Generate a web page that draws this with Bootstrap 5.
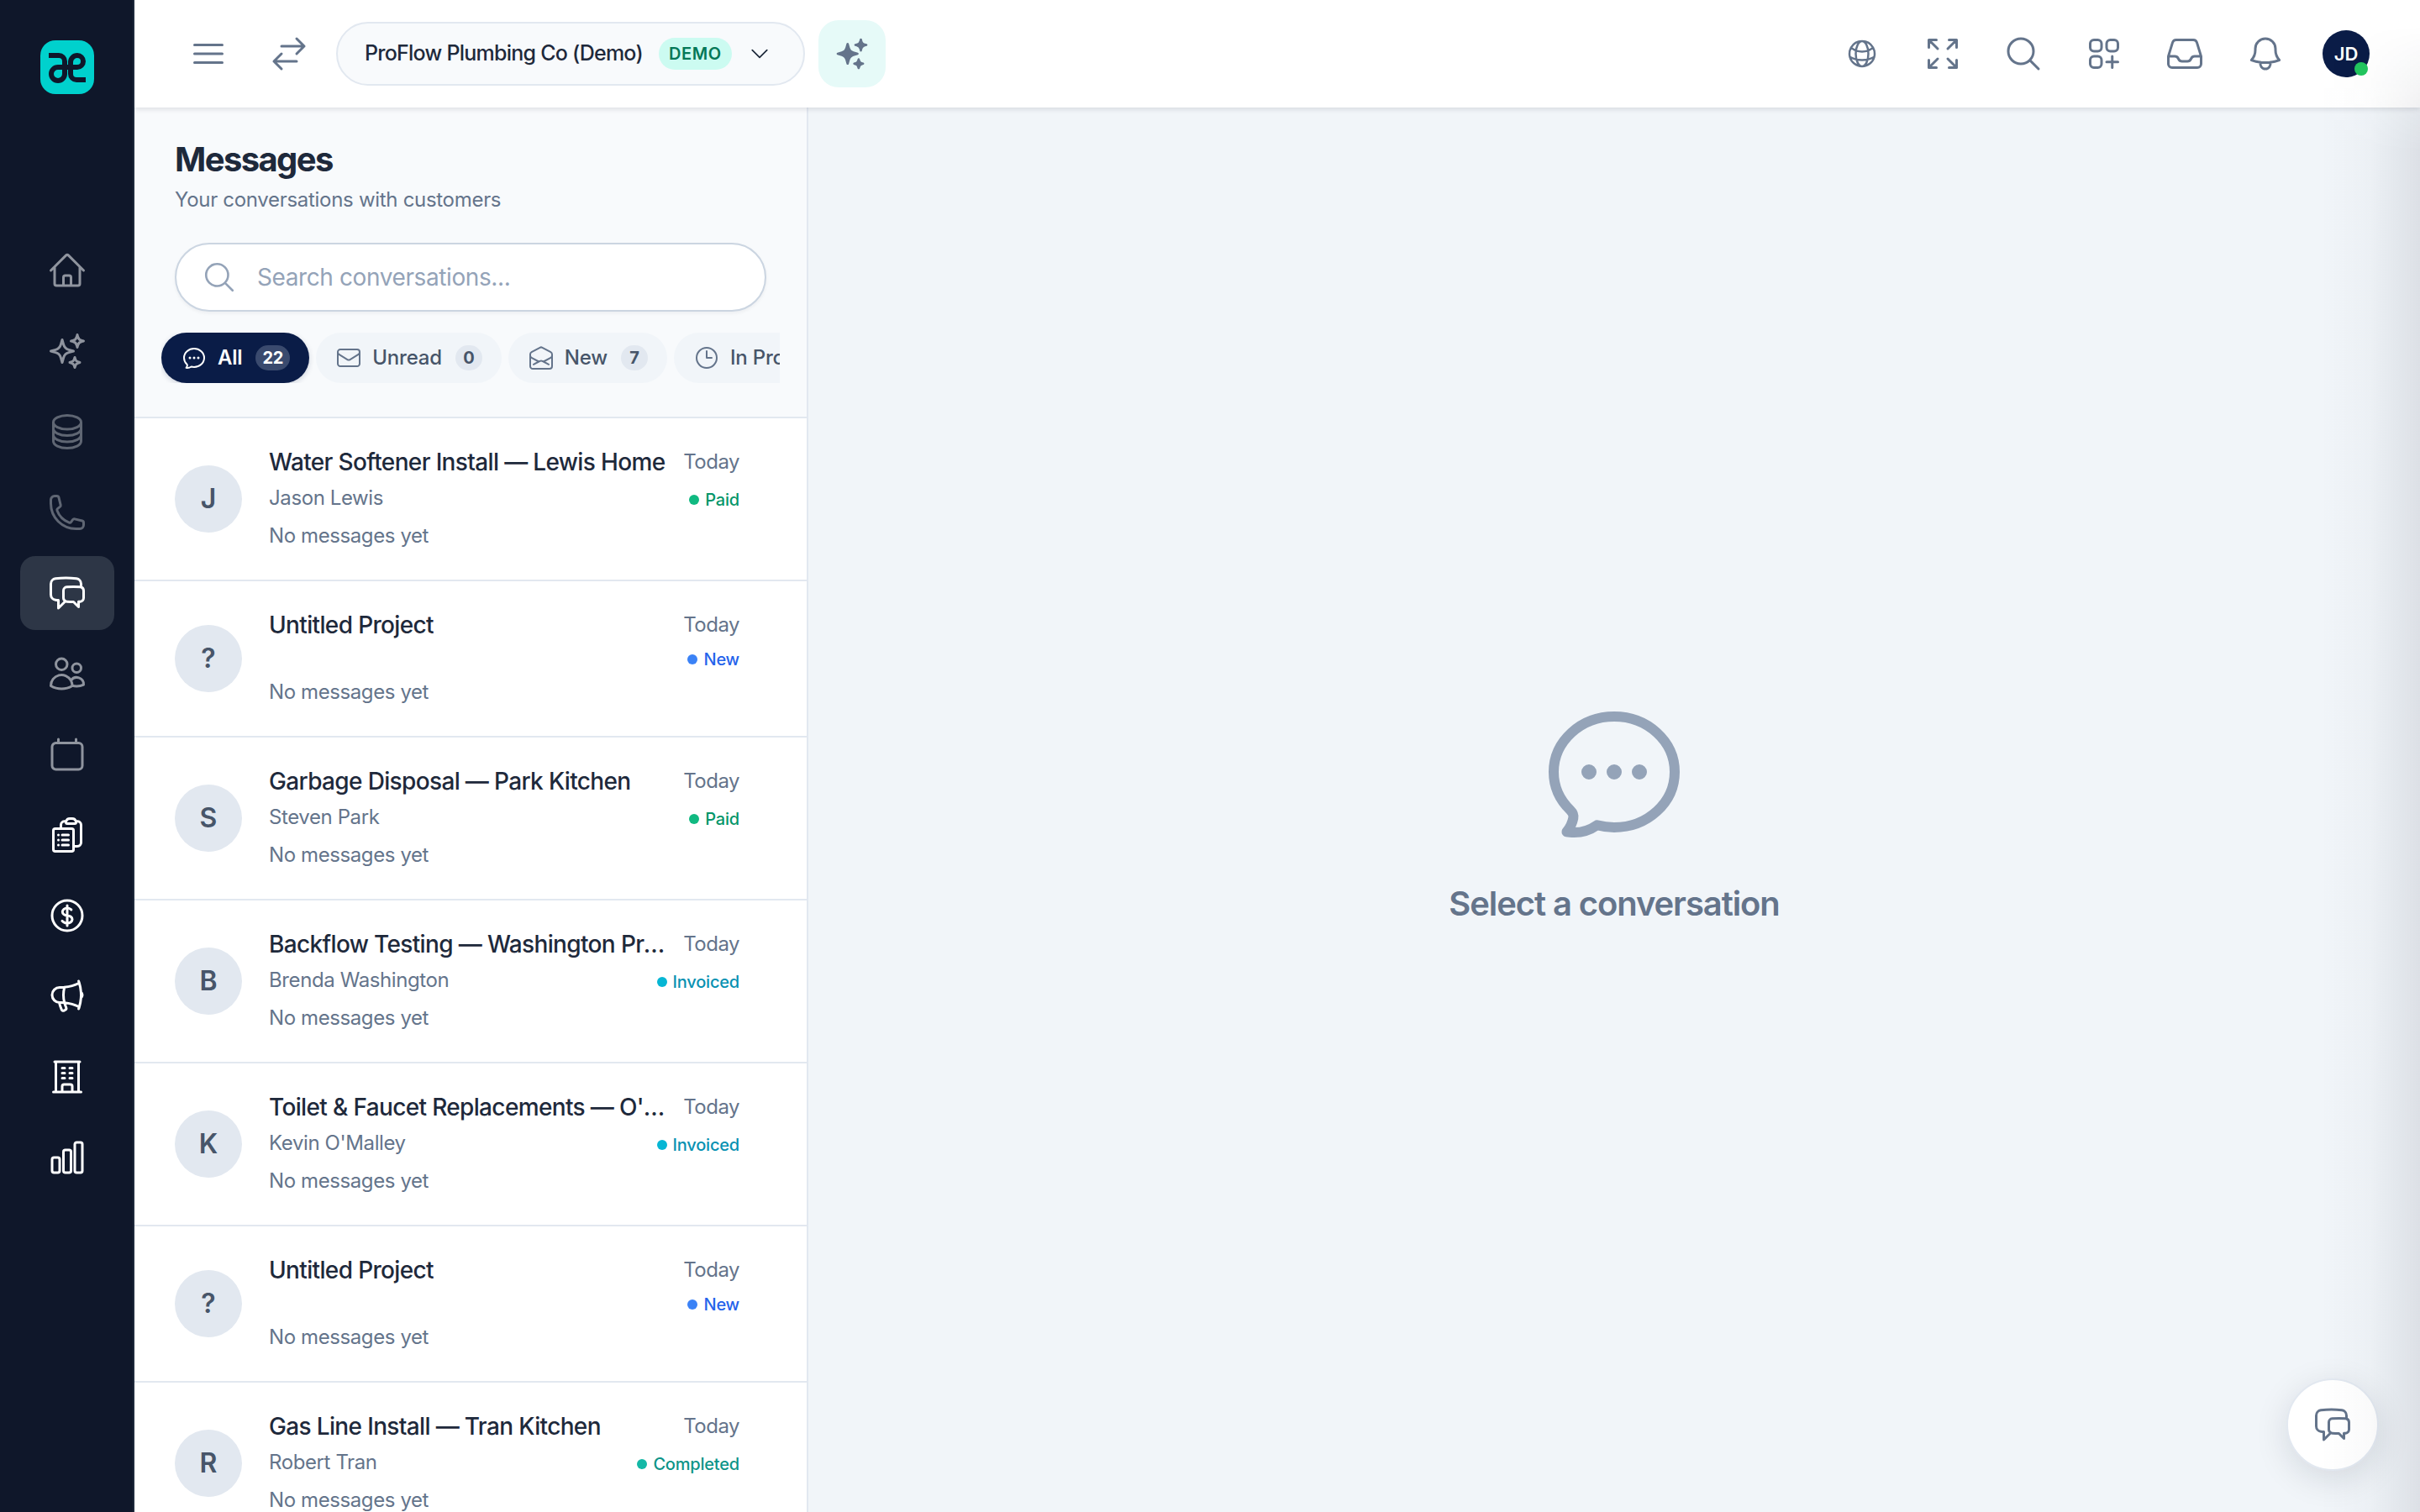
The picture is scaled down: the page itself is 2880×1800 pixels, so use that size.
<!DOCTYPE html>
<html lang="en">

<head>
    <meta charset="UTF-8">
    <title>Messages</title>
    <link href="https://cdn.jsdelivr.net/npm/bootstrap@5.3.0/dist/css/bootstrap.min.css" rel="stylesheet">
    <style>
        body {
            font-family: "Inter", "Liberation Sans", sans-serif;
            background-color: #f1f5f9;
            color: #1e293b;
        }

        .ico {
            fill: none;
            stroke: currentColor;
            stroke-width: 1.5;
            stroke-linecap: round;
            stroke-linejoin: round;
            flex-shrink: 0;
        }

        /* sidebar */
        .side-bar {
            width: 160px;
            background-color: #0f172a;
            border-right: 2px solid #1e293b;
        }

        .logo-box {
            width: 64px;
            height: 64px;
            margin: 48px 0 166px 48px;
            background-color: #00d1cd;
            border-radius: 18px;
        }

        .side-link {
            width: 112px;
            height: 88px;
            border-radius: 18px;
            margin-left: 24px;
            color: #fff;
        }

        .side-link.on {
            background-color: #2d3646;
        }

        .dim-1 {
            color: #8f949e;
        }

        .dim-2 {
            color: #5f6673;
        }

        /* top bar */
        .top-bar {
            height: 128px;
            background-color: #fff;
            box-shadow: 0 2px 6px rgba(15, 23, 42, .12);
            padding: 0 48px;
            z-index: 5;
        }

        .top-btn {
            width: 80px;
            height: 80px;
            padding: 0;
            border: 0;
            color: #64748b;
        }

        .org-pill {
            width: 558px;
            height: 76px;
            padding: 0 38px 0 32px;
            background-color: #f8fafc;
            border: 2px solid #e2e8f0;
            font-size: 25px;
            font-weight: 500;
            color: #1e293b;
            letter-spacing: -.75px;
            white-space: nowrap;
        }

        .demo-tag {
            margin-left: 19px;
            padding: 0 12px;
            height: 38px;
            line-height: 38px;
            font-size: 20px;
            font-weight: 600;
            letter-spacing: .6px;
            color: #047857;
            background-color: #ccfbf1;
        }

        .spark-btn {
            width: 80px;
            height: 80px;
            border-radius: 24px;
            background-color: #e6faf8;
            color: #64748b;
        }

        .me-chip {
            width: 56px;
            height: 56px;
            background-color: #0a1c47;
            color: #fff;
            font-size: 22px;
            font-weight: 600;
        }

        .on-dot {
            width: 16px;
            height: 16px;
            right: 2px;
            bottom: 2px;
            background-color: #22c55e;
        }

        /* messages panel */
        .msg-panel {
            width: 802px;
            background-color: #fff;
            border-right: 2px solid #e2e8f0;
        }

        .panel-head {
            background-color: #f8fafc;
            padding: 34px 32px 40px;
            border-bottom: 2px solid #e2e8f0;
        }

        .panel-title {
            font-size: 40px;
            line-height: 56px;
            font-weight: 700;
            letter-spacing: -1.6px;
            color: #1e293b;
            margin: 0 16px 2px;
        }

        .panel-sub {
            font-size: 24px;
            line-height: 36px;
            letter-spacing: -.3px;
            color: #64748b;
            margin: 0 16px 33px;
        }

        .search-wrap {
            margin: 0 0 25px 16px;
            width: 704px;
            color: #94a3b8;
        }

        .search-wrap svg {
            left: 32px;
            top: 20px;
        }

        .search-input {
            height: 82px;
            padding: 0 32px 0 96px;
            font-size: 28px;
            letter-spacing: -.4px;
            border: 2px solid #cbd5e1;
            box-shadow: 0 2px 4px rgba(15, 23, 42, .05);
        }

        .search-input::placeholder {
            color: #94a3b8;
        }

        .chip-row {
            width: 736px;
        }

        .chip {
            height: 60px;
            padding: 0 23px 0 23px;
            background-color: #f1f5f9;
            color: #475569;
            font-size: 24px;
            font-weight: 500;
            letter-spacing: -.2px;
            white-space: nowrap;
        }

        .chip svg {
            color: #64748b;
            margin-right: 12px;
        }

        .chip.on {
            background-color: #0a1c47;
            color: #fff;
            font-weight: 600;
            box-shadow: 0 2px 6px rgba(10, 28, 71, .18);
        }

        .chip.on svg {
            color: #fff;
        }

        .chip-num {
            margin-left: 16px;
            min-width: 32px;
            height: 30px;
            padding: 0 8px;
            font-size: 20px;
            line-height: 30px;
            font-weight: 700;
            text-align: center;
            color: #475569;
            background-color: #e2e8f0;
        }

        .chip.on .chip-num {
            min-width: 40px;
            color: #fff;
            background-color: #3a4a6e;
        }

        .list-group-flush > .list-group-item.msg-row {
            padding: 28px 80px 34px 48px;
            border-width: 0 0 2px;
            border-style: solid;
            border-color: #e2e8f0;
            border-radius: 0;
        }

        .avatar-chip {
            width: 80px;
            height: 80px;
            margin: 6px 32px 0 0;
            background-color: #e2e8f0;
            color: #475569;
            font-size: 32px;
            font-weight: 600;
        }

        .row-title {
            padding-top: 2px;
            font-size: 28px;
            line-height: 44px;
            font-weight: 500;
            letter-spacing: -.65px;
            color: #1e293b;
            margin-right: 16px;
        }

        .row-when {
            padding-top: 2px;
            font-size: 24px;
            line-height: 44px;
            letter-spacing: -.5px;
            color: #64748b;
        }

        .row-mid {
            margin-top: 4px;
            min-height: 28px;
        }

        .row-client {
            font-size: 24px;
            line-height: 34px;
            height: 36px;
            letter-spacing: -.4px;
            color: #64748b;
        }

        .row-status {
            padding-top: 2px;
            font-size: 20px;
            line-height: 26px;
            font-weight: 500;
            letter-spacing: -.2px;
        }

        .row-status i {
            display: inline-block;
            width: 12px;
            height: 12px;
            margin-right: 7px;
            border-radius: 50%;
        }

        .st-paid { color: #059669; }
        .st-paid i { background-color: #10b981; }
        .st-new { color: #2563eb; }
        .st-new i { background-color: #3b82f6; }
        .st-inv { color: #0891b2; }
        .st-inv i { background-color: #06b6d4; }
        .st-done { color: #0d9488; }
        .st-done i { background-color: #14b8a6; }

        .row-last {
            margin-top: 8px;
            font-size: 24px;
            line-height: 36px;
            letter-spacing: -.4px;
            color: #64748b;
        }

        /* empty state */
        .empty-label {
            margin-top: 31px;
            font-size: 40px;
            line-height: 60px;
            font-weight: 600;
            letter-spacing: -1.1px;
            color: #64748b;
        }

        .empty-icon {
            color: #94a3b8;
        }

        .help-fab {
            right: 49px;
            bottom: 49px;
            width: 110px;
            height: 110px;
            padding: 0;
            background-color: #fff;
            border: 2px solid #e2e8f0;
            color: #64748b;
            box-shadow: 0 10px 40px rgba(15, 23, 42, .12);
            z-index: 6;
        }

        .edge-shade {
            top: 0;
            right: 0;
            bottom: 0;
            width: 120px;
            background: linear-gradient(to right, rgba(15, 23, 42, 0), rgba(15, 23, 42, .02) 50%, rgba(15, 23, 42, .09));
            -webkit-mask-image: linear-gradient(to bottom, transparent 30px, #000 180px);
            mask-image: linear-gradient(to bottom, transparent 30px, #000 180px);
            pointer-events: none;
            z-index: 7;
        }
    </style>
</head>

<body>
    <!-- icon set -->
    <svg width="0" height="0" class="position-absolute">
        <defs>
            <symbol id="i-home" viewBox="0 0 24 24"><path d="m2.25 12 8.954-8.955c.44-.439 1.152-.439 1.591 0L21.75 12M4.5 9.75v10.125c0 .621.504 1.125 1.125 1.125H9.75v-4.875c0-.621.504-1.125 1.125-1.125h2.25c.621 0 1.125.504 1.125 1.125V21h4.125c.621 0 1.125-.504 1.125-1.125V9.75M8.25 21h8.25"/></symbol>
            <symbol id="i-spark" viewBox="0 0 24 24"><path d="M9.813 15.904 9 18.75l-.813-2.846a4.5 4.5 0 0 0-3.09-3.09L2.25 12l2.846-.813a4.5 4.5 0 0 0 3.09-3.09L9 5.25l.813 2.846a4.5 4.5 0 0 0 3.09 3.09L15.75 12l-2.846.813a4.5 4.5 0 0 0-3.09 3.09ZM18.259 8.715 18 9.75l-.259-1.035a3.375 3.375 0 0 0-2.455-2.456L14.25 6l1.036-.259a3.375 3.375 0 0 0 2.455-2.456L18 2.25l.259 1.035a3.375 3.375 0 0 0 2.456 2.456L21.75 6l-1.035.259a3.375 3.375 0 0 0-2.456 2.456ZM16.894 20.567 16.5 21.75l-.394-1.183a2.25 2.25 0 0 0-1.423-1.423L13.5 18.75l1.183-.394a2.25 2.25 0 0 0 1.423-1.423l.394-1.183.394 1.183a2.25 2.25 0 0 0 1.423 1.423l1.183.394-1.183.394a2.25 2.25 0 0 0-1.423 1.423Z"/></symbol>
            <symbol id="i-stack" viewBox="0 0 24 24"><path d="M20.25 6.375c0 2.278-3.694 4.125-8.25 4.125S3.75 8.653 3.75 6.375m16.5 0c0-2.278-3.694-4.125-8.25-4.125S3.75 4.097 3.75 6.375m16.5 0v11.25c0 2.278-3.694 4.125-8.25 4.125s-8.25-1.847-8.25-4.125V6.375m16.5 0v3.75m-16.5-3.75v3.75m16.5 0v3.75C20.25 16.153 16.556 18 12 18s-8.25-1.847-8.25-4.125v-3.75m16.5 0c0 2.278-3.694 4.125-8.25 4.125s-8.25-1.847-8.25-4.125"/></symbol>
            <symbol id="i-phone" viewBox="0 0 24 24"><path d="M2.25 6.75c0 8.284 6.716 15 15 15h2.25a2.25 2.25 0 0 0 2.25-2.25v-1.372c0-.516-.351-.966-.852-1.091l-4.423-1.106c-.44-.11-.902.055-1.173.417l-.97 1.293c-.282.376-.769.542-1.21.38a12.035 12.035 0 0 1-7.143-7.143c-.162-.441.004-.928.38-1.21l1.293-.97c.363-.271.527-.734.417-1.173L6.963 3.102a1.125 1.125 0 0 0-1.091-.852H4.5A2.25 2.25 0 0 0 2.25 4.5v2.25Z"/></symbol>
            <symbol id="i-chats" viewBox="0 0 24 24"><path d="M20.25 8.511c.884.284 1.5 1.128 1.5 2.097v4.286c0 1.136-.847 2.1-1.98 2.193-.34.027-.68.052-1.02.072v3.091l-3-3c-1.354 0-2.694-.055-4.02-.163a2.115 2.115 0 0 1-.825-.242m9.345-8.334a2.126 2.126 0 0 0-.476-.095 48.64 48.64 0 0 0-8.048 0c-1.131.094-1.976 1.057-1.976 2.192v4.286c0 .837.46 1.58 1.155 1.951m9.345-8.334V6.637c0-1.621-1.152-3.026-2.76-3.235A48.455 48.455 0 0 0 11.25 3c-2.115 0-4.198.137-6.24.402-1.608.209-2.76 1.614-2.76 3.235v6.226c0 1.621 1.152 3.026 2.76 3.235.577.075 1.157.14 1.74.194V21l4.155-4.155"/></symbol>
            <symbol id="i-users" viewBox="0 0 24 24"><path d="M15 19.128a9.38 9.38 0 0 0 2.625.372 9.337 9.337 0 0 0 4.121-.952 4.125 4.125 0 0 0-7.533-2.493M15 19.128v-.003c0-1.113-.285-2.16-.786-3.07M15 19.128v.106A12.318 12.318 0 0 1 8.624 21c-2.331 0-4.512-.645-6.374-1.766l-.001-.109a6.375 6.375 0 0 1 11.964-3.07M12 6.375a3.375 3.375 0 1 1-6.75 0 3.375 3.375 0 0 1 6.75 0Zm8.25 2.25a2.625 2.625 0 1 1-5.25 0 2.625 2.625 0 0 1 5.25 0Z"/></symbol>
            <symbol id="i-cal" viewBox="0 0 24 24"><path d="M6.75 3v2.25M17.25 3v2.25M3 18.75V7.500a2.250 2.250 0 0 1 2.250-2.250h13.500A2.250 2.250 0 0 1 21 7.500v11.250A2.250 2.250 0 0 1 18.750 21H5.250A2.250 2.250 0 0 1 3 18.750Z"/></symbol>
            <symbol id="i-clip" viewBox="0 0 24 24"><path d="M9 12h3.75M9 15h3.75M9 18h3.75m3 .75H18a2.25 2.25 0 0 0 2.25-2.25V6.108c0-1.135-.845-2.098-1.976-2.192a48.424 48.424 0 0 0-1.123-.08m-5.801 0c-.065.21-.1.433-.1.664 0 .414.336.75.75.75h4.5a.75.75 0 0 0 .75-.75 2.25 2.25 0 0 0-.1-.664m-5.8 0A2.251 2.251 0 0 1 13.5 2.25H15c1.012 0 1.867.668 2.15 1.586m-5.8 0c-.376.023-.75.05-1.124.08C9.095 4.01 8.25 4.973 8.25 6.108V8.25m0 0H4.875c-.621 0-1.125.504-1.125 1.125v11.25c0 .621.504 1.125 1.125 1.125h9.75c.621 0 1.125-.504 1.125-1.125V9.375c0-.621-.504-1.125-1.125-1.125H8.25ZM6.75 12h.008v.008H6.75V12Zm0 3h.008v.008H6.75V15Zm0 3h.008v.008H6.75V18Z"/></symbol>
            <symbol id="i-dollar" viewBox="0 0 24 24"><path d="M12 6v12m-3-2.818.879.659c1.171.879 3.07.879 4.242 0 1.172-.879 1.172-2.303 0-3.182C13.536 12.219 12.768 12 12 12c-.725 0-1.45-.22-2.003-.659-1.106-.879-1.106-2.303 0-3.182s2.9-.879 4.006 0l.415.33M21 12a9 9 0 1 1-18 0 9 9 0 0 1 18 0Z"/></symbol>
            <symbol id="i-mega" viewBox="0 0 24 24"><path d="M10.34 15.84c-.688-.06-1.386-.09-2.09-.09H7.5a4.5 4.5 0 1 1 0-9h.75c.704 0 1.402-.03 2.09-.09m0 9.18c.253.962.584 1.892.985 2.783.247.55.06 1.21-.463 1.511l-.657.38c-.551.318-1.26.117-1.527-.461a20.845 20.845 0 0 1-1.44-4.282m3.102.069a18.03 18.03 0 0 1-.59-4.59c0-1.586.205-3.124.59-4.59m0 9.18a23.848 23.848 0 0 1 8.835 2.535M10.34 6.66a23.847 23.847 0 0 0 8.835-2.535m0 0A23.74 23.74 0 0 0 18.795 3m.38 1.125a23.91 23.91 0 0 1 1.014 5.395m-1.014 8.855c-.118.38-.245.754-.38 1.125m.38-1.125a23.91 23.91 0 0 0 1.014-5.395m0-3.46c.495.413.811 1.035.811 1.73 0 .695-.316 1.317-.811 1.73m0-3.46a24.347 24.347 0 0 1 0 3.46"/></symbol>
            <symbol id="i-office" viewBox="0 0 24 24"><path d="M3.75 21h16.5M4.5 3h15M5.25 3v18m13.5-18v18M9 6.75h1.5m-1.5 3h1.5m-1.5 3h1.5m3-6H15m-1.5 3H15m-1.5 3H15M9 21v-3.375c0-.621.504-1.125 1.125-1.125h3.75c.621 0 1.125.504 1.125 1.125V21"/></symbol>
            <symbol id="i-chart" viewBox="0 0 24 24"><path d="M3 13.125C3 12.504 3.504 12 4.125 12h2.25c.621 0 1.125.504 1.125 1.125v6.75C7.5 20.496 6.996 21 6.375 21h-2.25A1.125 1.125 0 0 1 3 19.875v-6.75ZM9.75 8.625c0-.621.504-1.125 1.125-1.125h2.25c.621 0 1.125.504 1.125 1.125v11.25c0 .621-.504 1.125-1.125 1.125h-2.25a1.125 1.125 0 0 1-1.125-1.125V8.625ZM16.5 4.125c0-.621.504-1.125 1.125-1.125h2.25C20.496 3 21 3.504 21 4.125v15.75c0 .621-.504 1.125-1.125 1.125h-2.25a1.125 1.125 0 0 1-1.125-1.125V4.125Z"/></symbol>
            <symbol id="i-bars" viewBox="0 0 24 24"><path d="M3.75 6.75h16.5M3.75 12h16.5m-16.5 5.25h16.5"/></symbol>
            <symbol id="i-swap" viewBox="0 0 24 24"><path d="M7.5 21 3 16.5m0 0L7.5 12M3 16.5h13.5m0-13.5L21 7.5m0 0L16.5 12M21 7.5H7.5"/></symbol>
            <symbol id="i-chev" viewBox="0 0 24 24"><path d="m19.5 8.25-7.5 7.5-7.5-7.5"/></symbol>
            <symbol id="i-globe" viewBox="0 0 24 24"><path d="M12 21a9.004 9.004 0 0 0 8.716-6.747M12 21a9.004 9.004 0 0 1-8.716-6.747M12 21c2.485 0 4.5-4.03 4.5-9S14.485 3 12 3m0 18c-2.485 0-4.5-4.03-4.5-9S9.515 3 12 3m0 0a8.997 8.997 0 0 1 7.843 4.582M12 3a8.997 8.997 0 0 0-7.843 4.582m15.686 0A11.953 11.953 0 0 1 12 10.5c-2.998 0-5.74-1.1-7.843-2.918m15.686 0A8.959 8.959 0 0 1 21 12c0 .778-.099 1.533-.284 2.253m0 0A17.919 17.919 0 0 1 12 16.5c-3.162 0-6.133-.815-8.716-2.247m0 0A9.015 9.015 0 0 1 3 12c0-1.605.42-3.113 1.157-4.418"/></symbol>
            <symbol id="i-expand" viewBox="0 0 24 24"><path d="M3.75 3.75v4.5m0-4.5h4.5m-4.5 0L9 9M3.75 20.25v-4.5m0 4.5h4.5m-4.5 0L9 15M20.25 3.75h-4.5m4.5 0v4.5m0-4.5L15 9m5.25 11.25h-4.5m4.5 0v-4.5m0 4.5L15 15"/></symbol>
            <symbol id="i-search" viewBox="0 0 24 24"><path d="m21 21-5.197-5.197m0 0A7.5 7.5 0 1 0 5.196 5.196a7.5 7.5 0 0 0 10.607 10.607Z"/></symbol>
            <symbol id="i-squares" viewBox="0 0 24 24"><path d="M13.5 16.875h3.375m0 0h3.375m-3.375-3.375v3.375m0 3.375v-3.375M6 10.5h2.25a2.25 2.25 0 0 0 2.25-2.25V6a2.25 2.25 0 0 0-2.25-2.25H6A2.25 2.25 0 0 0 3.75 6v2.25A2.25 2.25 0 0 0 6 10.5Zm0 9.75h2.25A2.25 2.25 0 0 0 10.5 18v-2.25a2.25 2.25 0 0 0-2.25-2.25H6a2.25 2.25 0 0 0-2.25 2.25V18A2.25 2.25 0 0 0 6 20.25Zm9.75-9.75H18a2.25 2.25 0 0 0 2.25-2.25V6A2.25 2.25 0 0 0 18 3.75h-2.25A2.25 2.25 0 0 0 13.5 6v2.25a2.25 2.25 0 0 0 2.25 2.25Z"/></symbol>
            <symbol id="i-inbox" viewBox="0 0 24 24"><path d="M2.25 13.5h3.86a2.25 2.25 0 0 1 2.012 1.244l.256.512a2.25 2.25 0 0 0 2.013 1.244h3.218a2.25 2.25 0 0 0 2.013-1.244l.256-.512a2.25 2.25 0 0 1 2.013-1.244h3.859m-19.5.338V18a2.25 2.25 0 0 0 2.25 2.25h15A2.25 2.25 0 0 0 21.75 18v-4.162c0-.224-.034-.447-.1-.661L19.24 5.338a2.25 2.25 0 0 0-2.15-1.588H6.911a2.25 2.25 0 0 0-2.15 1.588L2.35 13.177a2.25 2.25 0 0 0-.1.661Z"/></symbol>
            <symbol id="i-bell" viewBox="0 0 24 24"><path d="M14.857 17.082a23.848 23.848 0 0 0 5.454-1.31A8.967 8.967 0 0 1 18 9.75V9A6 6 0 0 0 6 9v.75a8.967 8.967 0 0 1-2.312 6.022c1.733.64 3.56 1.085 5.455 1.31m5.714 0a24.255 24.255 0 0 1-5.714 0m5.714 0a3 3 0 1 1-5.714 0"/></symbol>
            <symbol id="i-mail" viewBox="0 0 24 24"><path d="M21.75 6.75v10.5a2.25 2.25 0 0 1-2.25 2.25h-15a2.25 2.25 0 0 1-2.25-2.25V6.75m19.5 0A2.25 2.25 0 0 0 19.5 4.5h-15a2.25 2.25 0 0 0-2.25 2.25m19.5 0v.243a2.25 2.25 0 0 1-1.07 1.916l-7.5 4.615a2.25 2.25 0 0 1-2.36 0L3.32 8.91a2.25 2.25 0 0 1-1.07-1.916V6.75"/></symbol>
            <symbol id="i-mailopen" viewBox="0 0 24 24"><path d="M21.75 9v.906a2.25 2.25 0 0 1-1.183 1.981l-6.478 3.488M2.25 9v.906a2.25 2.25 0 0 0 1.183 1.981l6.478 3.488m8.839 2.51-4.66-2.51m0 0-1.023-.55a2.25 2.25 0 0 0-2.134 0l-1.022.55m0 0-4.661 2.51m16.5 1.615a2.25 2.25 0 0 1-2.25 2.25h-15a2.25 2.25 0 0 1-2.25-2.25V8.844a2.25 2.25 0 0 1 1.183-1.981l7.5-4.039a2.25 2.25 0 0 1 2.134 0l7.5 4.039a2.25 2.25 0 0 1 1.183 1.98V19.5Z"/></symbol>
            <symbol id="i-clock" viewBox="0 0 24 24"><path d="M12 6v6h4.5m4.5 0a9 9 0 1 1-18 0 9 9 0 0 1 18 0Z"/></symbol>
            <symbol id="i-bubble" viewBox="0 0 24 24"><path d="M8.625 12a.375.375 0 1 1-.75 0 .375.375 0 0 1 .75 0Zm0 0H8.25m4.125 0a.375.375 0 1 1-.75 0 .375.375 0 0 1 .75 0Zm0 0H12m4.125 0a.375.375 0 1 1-.75 0 .375.375 0 0 1 .75 0Zm0 0h-.375M21 12c0 4.556-4.03 8.25-9 8.25a9.764 9.764 0 0 1-2.555-.337A5.972 5.972 0 0 1 5.41 20.97a5.969 5.969 0 0 1-.474-.065 4.48 4.48 0 0 0 .978-2.025c.09-.457-.133-.901-.467-1.226C3.93 16.178 3 14.189 3 12c0-4.556 4.03-8.25 9-8.25s9 3.694 9 8.25Z"/></symbol>
        </defs>
    </svg>

    <div class="d-flex vh-100 overflow-hidden">

        <!-- Sidebar -->
        <aside class="side-bar flex-shrink-0">
            <div class="logo-box">
                <svg width="64" height="64" viewBox="0 0 64 64" fill="none" stroke="#0f172a" stroke-width="6" stroke-linecap="butt">
                    <path d="M10 18H22a7 7 0 0 1 7 7V40a8 8 0 1 1-8-8H44a7 7 0 0 0 0-14a8 8 0 0 0-8 8V40a7 7 0 0 0 7 7H54"/>
                </svg>
            </div>
            <nav class="nav flex-column gap-2">
                <a class="nav-link side-link dim-1 d-flex align-items-center justify-content-center p-0" href="#"><svg class="ico" width="48" height="48"><use href="#i-home"/></svg></a>
                <a class="nav-link side-link dim-1 d-flex align-items-center justify-content-center p-0" href="#"><svg class="ico" width="48" height="48"><use href="#i-spark"/></svg></a>
                <a class="nav-link side-link dim-2 d-flex align-items-center justify-content-center p-0" href="#"><svg class="ico" width="48" height="48"><use href="#i-stack"/></svg></a>
                <a class="nav-link side-link dim-2 d-flex align-items-center justify-content-center p-0" href="#"><svg class="ico" width="48" height="48"><use href="#i-phone"/></svg></a>
                <a class="nav-link side-link on d-flex align-items-center justify-content-center p-0" href="#"><svg class="ico" width="48" height="48"><use href="#i-chats"/></svg></a>
                <a class="nav-link side-link dim-1 d-flex align-items-center justify-content-center p-0" href="#"><svg class="ico" width="48" height="48"><use href="#i-users"/></svg></a>
                <a class="nav-link side-link dim-1 d-flex align-items-center justify-content-center p-0" href="#"><svg class="ico" width="48" height="48"><use href="#i-cal"/></svg></a>
                <a class="nav-link side-link d-flex align-items-center justify-content-center p-0" href="#"><svg class="ico" width="48" height="48"><use href="#i-clip"/></svg></a>
                <a class="nav-link side-link d-flex align-items-center justify-content-center p-0" href="#"><svg class="ico" width="48" height="48"><use href="#i-dollar"/></svg></a>
                <a class="nav-link side-link d-flex align-items-center justify-content-center p-0" href="#"><svg class="ico" width="48" height="48"><use href="#i-mega"/></svg></a>
                <a class="nav-link side-link d-flex align-items-center justify-content-center p-0" href="#"><svg class="ico" width="48" height="48"><use href="#i-office"/></svg></a>
                <a class="nav-link side-link d-flex align-items-center justify-content-center p-0" href="#"><svg class="ico" width="48" height="48"><use href="#i-chart"/></svg></a>
            </nav>
        </aside>

        <div class="d-flex flex-column flex-grow-1 overflow-hidden">

            <!-- Top bar -->
            <header class="top-bar d-flex align-items-center flex-shrink-0 position-relative">
                <button class="btn top-btn d-flex align-items-center justify-content-center me-3"><svg class="ico" width="48" height="48"><use href="#i-bars"/></svg></button>
                <button class="btn top-btn d-flex align-items-center justify-content-center me-3"><svg class="ico" width="48" height="48"><use href="#i-swap"/></svg></button>
                <button class="btn org-pill rounded-pill d-flex align-items-center me-3">
                    ProFlow Plumbing Co (Demo)
                    <span class="demo-tag rounded-pill">DEMO</span>
                    <svg class="ico ms-auto" width="28" height="28"><use href="#i-chev"/></svg>
                </button>
                <button class="btn spark-btn d-flex align-items-center justify-content-center p-0">
                    <svg width="42" height="42" viewBox="0 0 24 24" fill="currentColor"><path d="M9 4.500a.75.75 0 0 1 .721.544l.813 2.846a3.75 3.75 0 0 0 2.576 2.576l2.846.813a.75.75 0 0 1 0 1.442l-2.846.813a3.75 3.75 0 0 0-2.576 2.576l-.813 2.846a.75.75 0 0 1-1.442 0l-.813-2.846a3.75 3.75 0 0 0-2.576-2.576l-2.846-.813a.75.75 0 0 1 0-1.442l2.846-.813A3.75 3.75 0 0 0 7.466 7.890l.813-2.846A.75.75 0 0 1 9 4.500ZM18 1.500a.75.75 0 0 1 .728.568l.258 1.036c.236.94.97 1.674 1.910 1.910l1.036.258a.75.75 0 0 1 0 1.456l-1.036.258c-.94.236-1.674.97-1.910 1.910l-.258 1.036a.75.75 0 0 1-1.456 0l-.258-1.036a2.625 2.625 0 0 0-1.910-1.910l-1.036-.258a.75.75 0 0 1 0-1.456l1.036-.258a2.625 2.625 0 0 0 1.910-1.910l.258-1.036A.75.75 0 0 1 18 1.500ZM16.500 15a.75.75 0 0 1 .712.513l.394 1.183c.15.447.5.799.948.948l1.183.395a.75.75 0 0 1 0 1.422l-1.183.395c-.447.15-.799.5-.948.948l-.395 1.183a.75.75 0 0 1-1.422 0l-.395-1.183a1.500 1.500 0 0 0-.948-.948l-1.183-.395a.75.75 0 0 1 0-1.422l1.183-.395c.447-.15.799-.5.948-.948l.395-1.183A.75.75 0 0 1 16.500 15Z"/></svg>
                </button>
                <div class="d-flex align-items-center gap-3 ms-auto">
                    <button class="btn top-btn d-flex align-items-center justify-content-center"><svg class="ico" width="40" height="40"><use href="#i-globe"/></svg></button>
                    <button class="btn top-btn d-flex align-items-center justify-content-center"><svg class="ico" width="48" height="48"><use href="#i-expand"/></svg></button>
                    <button class="btn top-btn d-flex align-items-center justify-content-center"><svg class="ico" width="48" height="48"><use href="#i-search"/></svg></button>
                    <button class="btn top-btn d-flex align-items-center justify-content-center"><svg class="ico" width="48" height="48"><use href="#i-squares"/></svg></button>
                    <button class="btn top-btn d-flex align-items-center justify-content-center"><svg class="ico" width="48" height="48"><use href="#i-inbox"/></svg></button>
                    <button class="btn top-btn d-flex align-items-center justify-content-center"><svg class="ico" width="48" height="48"><use href="#i-bell"/></svg></button>
                    <div class="top-btn d-flex align-items-center justify-content-center">
                        <div class="me-chip rounded-circle d-flex align-items-center justify-content-center position-relative">JD
                            <span class="on-dot rounded-circle position-absolute"></span>
                        </div>
                    </div>
                </div>
            </header>

            <div class="d-flex flex-grow-1 overflow-hidden">

                <!-- Conversation list -->
                <section class="msg-panel flex-shrink-0 overflow-hidden">
                    <div class="panel-head">
                        <h1 class="panel-title">Messages</h1>
                        <p class="panel-sub">Your conversations with customers</p>
                        <div class="search-wrap position-relative">
                            <svg class="ico position-absolute" width="42" height="42"><use href="#i-search"/></svg>
                            <input class="form-control search-input rounded-pill" type="text" placeholder="Search conversations...">
                        </div>
                        <div class="chip-row d-flex gap-2 overflow-hidden">
                            <span class="chip on rounded-pill d-inline-flex align-items-center"><svg class="ico" width="32" height="32"><use href="#i-bubble"/></svg>All<span class="chip-num rounded-pill">22</span></span>
                            <span class="chip rounded-pill d-inline-flex align-items-center"><svg class="ico" width="32" height="32"><use href="#i-mail"/></svg>Unread<span class="chip-num rounded-pill">0</span></span>
                            <span class="chip rounded-pill d-inline-flex align-items-center"><svg class="ico" width="32" height="32"><use href="#i-mailopen"/></svg>New<span class="chip-num rounded-pill">7</span></span>
                            <span class="chip rounded-pill d-inline-flex align-items-center"><svg class="ico" width="32" height="32"><use href="#i-clock"/></svg>In Progress<span class="chip-num rounded-pill">4</span></span>
                        </div>
                    </div>

                    <div class="list-group list-group-flush">
                        <div class="list-group-item msg-row d-flex align-items-center">
                            <div class="avatar-chip rounded-circle d-flex align-items-center justify-content-center flex-shrink-0">J</div>
                            <div class="flex-grow-1 overflow-hidden">
                                <div class="d-flex justify-content-between">
                                    <div class="row-title text-truncate">Water Softener Install — Lewis Home</div>
                                    <div class="row-when flex-shrink-0">Today</div>
                                </div>
                                <div class="row-mid d-flex justify-content-between align-items-center">
                                    <div class="row-client align-self-start">Jason Lewis</div>
                                    <div class="row-status st-paid d-flex align-items-center"><i></i>Paid</div>
                                </div>
                                <div class="row-last">No messages yet</div>
                            </div>
                        </div>

                        <div class="list-group-item msg-row d-flex align-items-center">
                            <div class="avatar-chip rounded-circle d-flex align-items-center justify-content-center flex-shrink-0">?</div>
                            <div class="flex-grow-1 overflow-hidden">
                                <div class="d-flex justify-content-between">
                                    <div class="row-title text-truncate">Untitled Project</div>
                                    <div class="row-when flex-shrink-0">Today</div>
                                </div>
                                <div class="row-mid d-flex justify-content-end align-items-center">
                                    <div class="row-status st-new d-flex align-items-center"><i></i>New</div>
                                </div>
                                <div class="row-last">No messages yet</div>
                            </div>
                        </div>

                        <div class="list-group-item msg-row d-flex align-items-center">
                            <div class="avatar-chip rounded-circle d-flex align-items-center justify-content-center flex-shrink-0">S</div>
                            <div class="flex-grow-1 overflow-hidden">
                                <div class="d-flex justify-content-between">
                                    <div class="row-title text-truncate">Garbage Disposal — Park Kitchen</div>
                                    <div class="row-when flex-shrink-0">Today</div>
                                </div>
                                <div class="row-mid d-flex justify-content-between align-items-center">
                                    <div class="row-client align-self-start">Steven Park</div>
                                    <div class="row-status st-paid d-flex align-items-center"><i></i>Paid</div>
                                </div>
                                <div class="row-last">No messages yet</div>
                            </div>
                        </div>

                        <div class="list-group-item msg-row d-flex align-items-center">
                            <div class="avatar-chip rounded-circle d-flex align-items-center justify-content-center flex-shrink-0">B</div>
                            <div class="flex-grow-1 overflow-hidden">
                                <div class="d-flex justify-content-between">
                                    <div class="row-title text-truncate">Backflow Testing — Washington Property</div>
                                    <div class="row-when flex-shrink-0">Today</div>
                                </div>
                                <div class="row-mid d-flex justify-content-between align-items-center">
                                    <div class="row-client align-self-start">Brenda Washington</div>
                                    <div class="row-status st-inv d-flex align-items-center"><i></i>Invoiced</div>
                                </div>
                                <div class="row-last">No messages yet</div>
                            </div>
                        </div>

                        <div class="list-group-item msg-row d-flex align-items-center">
                            <div class="avatar-chip rounded-circle d-flex align-items-center justify-content-center flex-shrink-0">K</div>
                            <div class="flex-grow-1 overflow-hidden">
                                <div class="d-flex justify-content-between">
                                    <div class="row-title text-truncate">Toilet &amp; Faucet Replacements — O'Malley Home</div>
                                    <div class="row-when flex-shrink-0">Today</div>
                                </div>
                                <div class="row-mid d-flex justify-content-between align-items-center">
                                    <div class="row-client align-self-start">Kevin O'Malley</div>
                                    <div class="row-status st-inv d-flex align-items-center"><i></i>Invoiced</div>
                                </div>
                                <div class="row-last">No messages yet</div>
                            </div>
                        </div>

                        <div class="list-group-item msg-row d-flex align-items-center">
                            <div class="avatar-chip rounded-circle d-flex align-items-center justify-content-center flex-shrink-0">?</div>
                            <div class="flex-grow-1 overflow-hidden">
                                <div class="d-flex justify-content-between">
                                    <div class="row-title text-truncate">Untitled Project</div>
                                    <div class="row-when flex-shrink-0">Today</div>
                                </div>
                                <div class="row-mid d-flex justify-content-end align-items-center">
                                    <div class="row-status st-new d-flex align-items-center"><i></i>New</div>
                                </div>
                                <div class="row-last">No messages yet</div>
                            </div>
                        </div>

                        <div class="list-group-item msg-row d-flex align-items-center">
                            <div class="avatar-chip rounded-circle d-flex align-items-center justify-content-center flex-shrink-0">R</div>
                            <div class="flex-grow-1 overflow-hidden">
                                <div class="d-flex justify-content-between">
                                    <div class="row-title text-truncate">Gas Line Install — Tran Kitchen</div>
                                    <div class="row-when flex-shrink-0">Today</div>
                                </div>
                                <div class="row-mid d-flex justify-content-between align-items-center">
                                    <div class="row-client align-self-start">Robert Tran</div>
                                    <div class="row-status st-done d-flex align-items-center"><i></i>Completed</div>
                                </div>
                                <div class="row-last">No messages yet</div>
                            </div>
                        </div>
                    </div>
                </section>

                <!-- Empty state -->
                <main class="flex-grow-1 d-flex flex-column align-items-center justify-content-center">
                    <svg class="ico empty-icon" width="192" height="192"><use href="#i-bubble"/></svg>
                    <div class="empty-label">Select a conversation</div>
                </main>
            </div>
        </div>
    </div>

    <button class="btn help-fab rounded-circle position-fixed d-flex align-items-center justify-content-center"><svg class="ico" width="48" height="48"><use href="#i-chats"/></svg></button>
    <div class="edge-shade position-fixed"></div>

    <script src="https://cdn.jsdelivr.net/npm/bootstrap@5.3.0/dist/js/bootstrap.bundle.min.js"></script>
</body>

</html>
